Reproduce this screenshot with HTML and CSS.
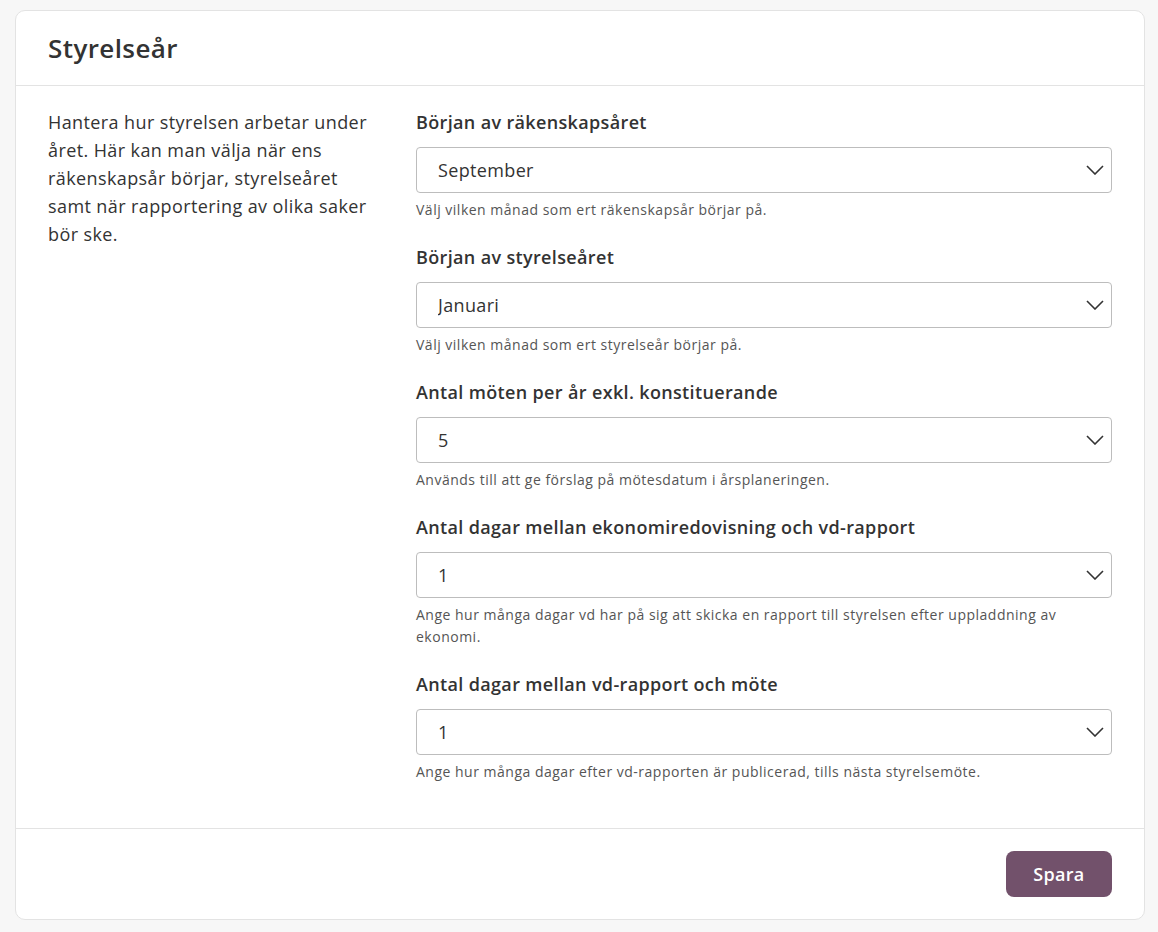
FILE: index.html
```html
<!DOCTYPE html>
<html lang="sv">
<head>
    <meta charset="UTF-8">
    <meta name="viewport" content="width=device-width, initial-scale=1.0">
    <title>Styrelseår</title>
    <link rel="stylesheet" href="styles.css">
</head>
<body>
    <div class="card">
        <div class="card-header">
            <h2>Styrelseår</h2>
        </div>
        <div class="card-body">
            <p class="intro">Hantera hur styrelsen arbetar under året. Här kan man välja när ens räkenskapsår börjar, styrelseåret samt när rapportering av olika saker bör ske.</p>
            <div class="fields">
                <div class="field">
                    <label for="fiscalStart">Början av räkenskapsåret</label>
                    <div class="select-wrap">
                        <select id="fiscalStart">
                            <option>Januari</option>
                            <option selected>September</option>
                        </select>
                        <svg class="chevron" viewBox="0 0 18 10"><path d="M1 1l8 8 8-8"/></svg>
                    </div>
                    <p class="help">Välj vilken månad som ert räkenskapsår börjar på.</p>
                </div>
                <div class="field">
                    <label for="boardStart">Början av styrelseåret</label>
                    <div class="select-wrap">
                        <select id="boardStart">
                            <option selected>Januari</option>
                            <option>September</option>
                        </select>
                        <svg class="chevron" viewBox="0 0 18 10"><path d="M1 1l8 8 8-8"/></svg>
                    </div>
                    <p class="help">Välj vilken månad som ert styrelseår börjar på.</p>
                </div>
                <div class="field">
                    <label for="meetings">Antal möten per år exkl. konstituerande</label>
                    <div class="select-wrap">
                        <select id="meetings">
                            <option>4</option>
                            <option selected>5</option>
                            <option>6</option>
                        </select>
                        <svg class="chevron" viewBox="0 0 18 10"><path d="M1 1l8 8 8-8"/></svg>
                    </div>
                    <p class="help">Används till att ge förslag på mötesdatum i årsplaneringen.</p>
                </div>
                <div class="field">
                    <label for="reportDays">Antal dagar mellan ekonomiredovisning och vd-rapport</label>
                    <div class="select-wrap">
                        <select id="reportDays">
                            <option selected>1</option>
                            <option>2</option>
                        </select>
                        <svg class="chevron" viewBox="0 0 18 10"><path d="M1 1l8 8 8-8"/></svg>
                    </div>
                    <p class="help">Ange hur många dagar vd har på sig att skicka en rapport till styrelsen efter uppladdning av ekonomi.</p>
                </div>
                <div class="field">
                    <label for="meetingDays">Antal dagar mellan vd-rapport och möte</label>
                    <div class="select-wrap">
                        <select id="meetingDays">
                            <option selected>1</option>
                            <option>2</option>
                        </select>
                        <svg class="chevron" viewBox="0 0 18 10"><path d="M1 1l8 8 8-8"/></svg>
                    </div>
                    <p class="help">Ange hur många dagar efter vd-rapporten är publicerad, tills nästa styrelsemöte.</p>
                </div>
            </div>
        </div>
        <div class="card-footer">
            <button class="btn-save">Spara</button>
        </div>
    </div>
</body>
</html>
```

FILE: styles.css
```css
body {
    margin: 0;
    padding: 10px 13px 12px 15px;
    background: #f7f7f7;
    font-family: "Open Sans", "Noto Sans", sans-serif;
    color: #333;
}
.card {
    background: #fff;
    border: 1px solid #e3e3e3;
    border-radius: 10px;
}
.card-header {
    padding: 21px 32px;
    border-bottom: 1px solid #e3e3e3;
}
.card-header h2 {
    margin: 0;
    font-size: 26px;
    line-height: 32px;
    font-weight: 600;
    letter-spacing: 0.4px;
    color: #333;
}
.card-body {
    display: grid;
    grid-template-columns: 336px 1fr;
    gap: 32px;
    padding: 22px 32px 23px;
    border-bottom: 1px solid #e3e3e3;
}
.intro {
    margin: 0;
    font-size: 18px;
    line-height: 28px;
    letter-spacing: 0.4px;
    color: #333;
}
.field {
    margin-bottom: 22px;
}
.field label {
    display: block;
    font-size: 18px;
    line-height: 28px;
    font-weight: 600;
    letter-spacing: 0.35px;
    margin-bottom: 11px;
}
.select-wrap {
    position: relative;
}
.select-wrap select {
    width: 100%;
    height: 46px;
    padding: 0 44px 0 21px;
    border: 1px solid #bdbdbd;
    border-radius: 4px;
    background: #fff;
    font-family: inherit;
    font-size: 18px;
    letter-spacing: 0.35px;
    color: #333;
    appearance: none;
    -webkit-appearance: none;
}
.chevron {
    position: absolute;
    right: 8px;
    top: 18px;
    width: 18px;
    height: 10px;
    fill: none;
    stroke: #333;
    stroke-width: 1.6;
    pointer-events: none;
}
.help {
    margin: 6px 0 0;
    font-size: 14px;
    line-height: 22px;
    letter-spacing: 0.5px;
    color: #555;
}
.card-footer {
    display: flex;
    justify-content: flex-end;
    padding: 22px 32px;
}
.btn-save {
    width: 106px;
    height: 46px;
    border: none;
    border-radius: 8px;
    background: #72516b;
    color: #fff;
    font-family: inherit;
    font-size: 18px;
    font-weight: 600;
    letter-spacing: 0.3px;
    cursor: pointer;
}
```
